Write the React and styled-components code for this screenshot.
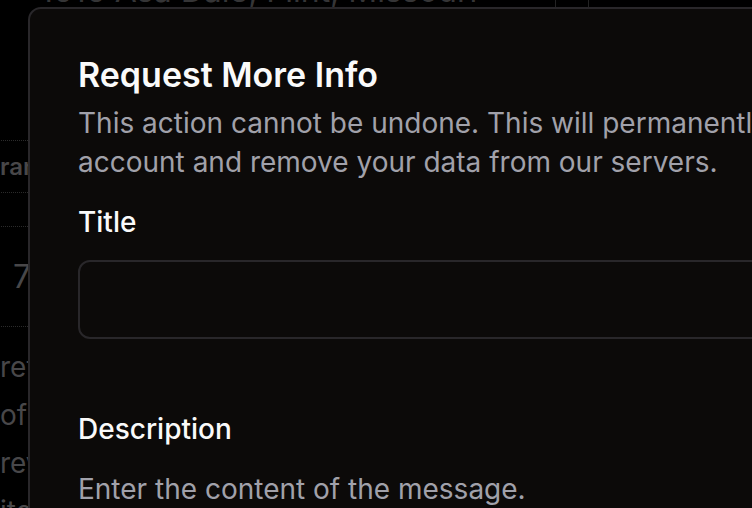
import styled, { createGlobalStyle } from "styled-components";

const GlobalStyle = createGlobalStyle`
  html, body {
    margin: 0;
    padding: 0;
    background: #000;
    overflow: hidden;
    font-family: Inter, "Noto Sans", sans-serif;
  }
  #root {
    height: 508px;
  }
`;

const Screen = styled.div`
  position: relative;
  width: 752px;
  height: 508px;
  overflow: hidden;
`;

const Page = styled.div`
  display: flex;
  flex-direction: column;
  margin: -27px 0 0 -14px;
  color: #555456;
`;

const AddressRow = styled.div`
  display: flex;
  height: 167px;
  border-bottom: 1px dotted #333;
`;

const AddressCell = styled.div`
  flex-shrink: 0;
  box-sizing: border-box;
  width: ${(p) => p.width}px;
  padding-left: ${(p) => p.pad || 0}px;
  border-right: 1px solid #2a2a2a;
  font-size: 32px;
  line-height: 36px;
  color: #3f3f40;
  white-space: nowrap;
`;

const Row = styled.div`
  display: flex;
  align-items: center;
  height: ${(p) => p.h}px;
  padding-left: ${(p) => p.indent || 0}px;
  text-indent: ${(p) => p.shift || 0}px;
  border-bottom: 1px dotted #333;
  font-size: ${(p) => p.size || 26}px;
  font-weight: ${(p) => p.weight || 400};
  white-space: nowrap;
`;

const Paragraph = styled.div`
  padding: 16px 0 0 14px;
  font-size: 28px;
  line-height: 48px;
  white-space: nowrap;
`;

const Overlay = styled.div`
  position: absolute;
  inset: 0;
  background: rgba(0, 0, 0, 0.15);
`;

const Dialog = styled.div`
  position: absolute;
  left: 28px;
  top: 7px;
  width: 1100px;
  height: 640px;
  box-sizing: border-box;
  display: flex;
  flex-direction: column;
  padding: 46px 48px;
  background: #0c0a09;
  border: 2px solid #29272a;
  border-radius: 13px;
`;

const Title = styled.h2`
  margin: 0;
  font-size: 34px;
  line-height: 40px;
  font-weight: 600;
  color: #fafafa;
`;

const Description = styled.p`
  margin: 9px 0 0;
  width: 920px;
  font-size: 28px;
  line-height: 39px;
  color: #a1a1aa;
`;

const Field = styled.div`
  display: flex;
  flex-direction: column;
  margin-top: ${(p) => p.gap}px;
`;

const Label = styled.label`
  font-size: 28px;
  line-height: 28px;
  font-weight: 500;
  color: #fafafa;
`;

const Input = styled.input`
  margin-top: 24px;
  width: 960px;
  height: 79px;
  box-sizing: border-box;
  background: transparent;
  border: 2px solid #29272a;
  border-radius: 12px;
  outline: none;
  padding: 0 20px;
  font-family: inherit;
  font-size: 28px;
  color: #fafafa;
`;

const Hint = styled.p`
  margin: 27px 0 0;
  font-size: 28px;
  line-height: 39px;
  color: #a1a1aa;
`;

export default function App() {
  return (
    <>
      <GlobalStyle />
      <Screen>
        <Page>
          <AddressRow>
            <AddressCell width={570} pad={54}>
              1616 Asa Dale, Flint, Missouri
            </AddressCell>
            <AddressCell width={33} />
            <AddressCell width={200} />
          </AddressRow>
          <Row h={51} size={24} weight={600} shift={-4}>
            Grantee
          </Row>
          <Row h={33} />
          <Row h={99} size={32} indent={27}>
            7
          </Row>
          <Paragraph>
            retained on file
            <br />
            of record
            <br />
            review pending
            <br />
            itemized
          </Paragraph>
        </Page>
        <Overlay />
        <Dialog role="dialog">
          <Title>Request More Info</Title>
          <Description>
            This action cannot be undone. This will permanently delete your
            account and remove your data from our servers.
          </Description>
          <Field gap={26}>
            <Label>Title</Label>
            <Input />
          </Field>
          <Field gap={76}>
            <Label>Description</Label>
            <Hint>Enter the content of the message.</Hint>
          </Field>
        </Dialog>
      </Screen>
    </>
  );
}
